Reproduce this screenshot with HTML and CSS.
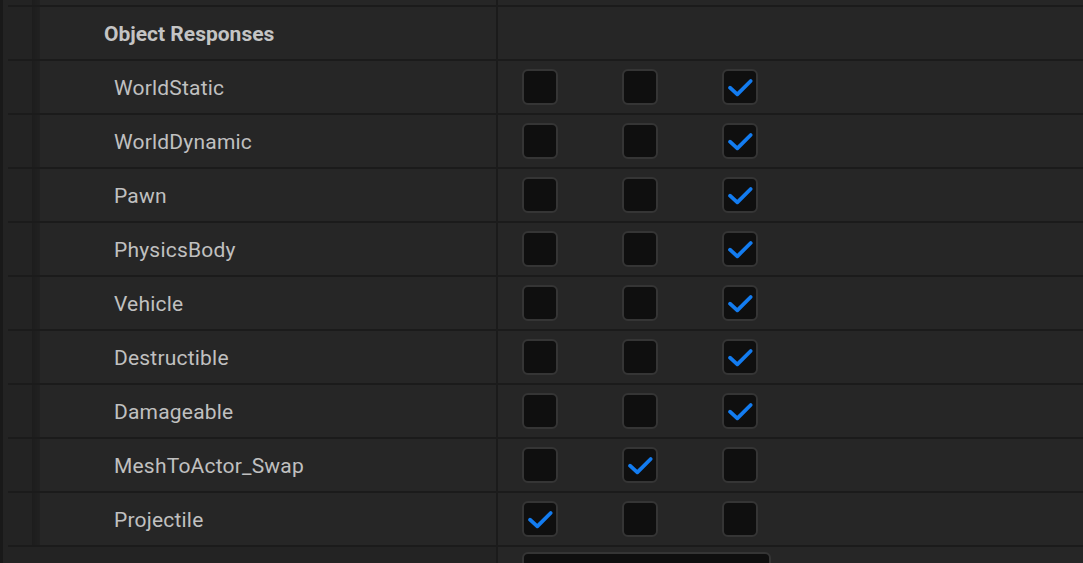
FILE: index.html
```html
<!DOCTYPE html>
<html lang="en">
<head>
    <meta charset="UTF-8">
    <meta name="viewport" content="width=device-width, initial-scale=1.0">
    <title>Collision Presets</title>
    <link rel="stylesheet" href="styles.css">
</head>
<body>
    <div class="panel">
        <div class="edge"></div>
        <div class="list">
            <!-- resto da linha anterior -->
            <div class="row stub">
                <div class="indent"></div>
                <div class="shade"></div>
                <div class="name"></div>
                <div class="divider"></div>
                <div class="value"></div>
            </div>

            <div class="row">
                <div class="indent"></div>
                <div class="shade"></div>
                <div class="name header">Object Responses</div>
                <div class="divider"></div>
                <div class="value"></div>
            </div>

            <div class="row">
                <div class="indent"></div>
                <div class="shade"></div>
                <div class="name">WorldStatic</div>
                <div class="divider"></div>
                <div class="value">
                    <span class="check"></span>
                    <span class="check"></span>
                    <span class="check on"><svg viewBox="0 0 32 32"><path d="M6 16.7 L13.3 23.3 L26.7 10"/></svg></span>
                </div>
            </div>

            <div class="row">
                <div class="indent"></div>
                <div class="shade"></div>
                <div class="name">WorldDynamic</div>
                <div class="divider"></div>
                <div class="value">
                    <span class="check"></span>
                    <span class="check"></span>
                    <span class="check on"><svg viewBox="0 0 32 32"><path d="M6 16.7 L13.3 23.3 L26.7 10"/></svg></span>
                </div>
            </div>

            <div class="row">
                <div class="indent"></div>
                <div class="shade"></div>
                <div class="name">Pawn</div>
                <div class="divider"></div>
                <div class="value">
                    <span class="check"></span>
                    <span class="check"></span>
                    <span class="check on"><svg viewBox="0 0 32 32"><path d="M6 16.7 L13.3 23.3 L26.7 10"/></svg></span>
                </div>
            </div>

            <div class="row">
                <div class="indent"></div>
                <div class="shade"></div>
                <div class="name">PhysicsBody</div>
                <div class="divider"></div>
                <div class="value">
                    <span class="check"></span>
                    <span class="check"></span>
                    <span class="check on"><svg viewBox="0 0 32 32"><path d="M6 16.7 L13.3 23.3 L26.7 10"/></svg></span>
                </div>
            </div>

            <div class="row">
                <div class="indent"></div>
                <div class="shade"></div>
                <div class="name">Vehicle</div>
                <div class="divider"></div>
                <div class="value">
                    <span class="check"></span>
                    <span class="check"></span>
                    <span class="check on"><svg viewBox="0 0 32 32"><path d="M6 16.7 L13.3 23.3 L26.7 10"/></svg></span>
                </div>
            </div>

            <div class="row">
                <div class="indent"></div>
                <div class="shade"></div>
                <div class="name">Destructible</div>
                <div class="divider"></div>
                <div class="value">
                    <span class="check"></span>
                    <span class="check"></span>
                    <span class="check on"><svg viewBox="0 0 32 32"><path d="M6 16.7 L13.3 23.3 L26.7 10"/></svg></span>
                </div>
            </div>

            <div class="row">
                <div class="indent"></div>
                <div class="shade"></div>
                <div class="name">Damageable</div>
                <div class="divider"></div>
                <div class="value">
                    <span class="check"></span>
                    <span class="check"></span>
                    <span class="check on"><svg viewBox="0 0 32 32"><path d="M6 16.7 L13.3 23.3 L26.7 10"/></svg></span>
                </div>
            </div>

            <div class="row">
                <div class="indent"></div>
                <div class="shade"></div>
                <div class="name">MeshToActor_Swap</div>
                <div class="divider"></div>
                <div class="value">
                    <span class="check"></span>
                    <span class="check on"><svg viewBox="0 0 32 32"><path d="M6 16.7 L13.3 23.3 L26.7 10"/></svg></span>
                    <span class="check"></span>
                </div>
            </div>

            <div class="row last">
                <div class="indent"></div>
                <div class="shade"></div>
                <div class="name">Projectile</div>
                <div class="divider"></div>
                <div class="value">
                    <span class="check on"><svg viewBox="0 0 32 32"><path d="M6 16.7 L13.3 23.3 L26.7 10"/></svg></span>
                    <span class="check"></span>
                    <span class="check"></span>
                </div>
            </div>

            <!-- próxima propriedade (combo) -->
            <div class="footer">
                <div class="footer-name"></div>
                <div class="divider"></div>
                <div class="value">
                    <div class="combo"></div>
                </div>
            </div>
        </div>
    </div>
</body>
</html>
```

FILE: styles.css
```css
/* Painel de detalhes */
body {
    margin: 0;
    padding: 0;
    background-color: #232323;
    font-family: Roboto, "Liberation Sans", sans-serif;
    color: #c0c0c0;
    overflow: hidden;
}

.panel {
    display: flex;
    height: 563px;
}

.edge {
    width: 3px;
    background-color: #191919;
}

.list {
    flex: 1;
    margin-left: 5px;
    display: flex;
    flex-direction: column;
}

.row {
    display: grid;
    grid-template-columns: 24px 8px 456px 2px 1fr;
    height: 52px;
    flex-shrink: 0;
    border-top: 2px solid #1b1b1b;
}

.row.stub {
    height: 5px;
    border-top: none;
}

.row.last {
    border-bottom: 2px solid #1b1b1b;
}

.indent {
    background-color: #232323;
}

.shade {
    background: linear-gradient(to right, #1d1d1d, #212121);
}

.name {
    background-color: #262626;
    display: flex;
    align-items: center;
    padding-left: 74px;
    padding-top: 1px;
    font-size: 21px;
    letter-spacing: 0.2px;
}

.name.header {
    padding-left: 64px;
    font-weight: bold;
    letter-spacing: 0;
    color: #c4c4c4;
}

.divider {
    background-color: #1b1b1b;
}

.value {
    background-color: #262626;
    display: flex;
    align-items: center;
    gap: 64px;
    padding-left: 24px;
}

/* Caixas de seleção */
.check {
    width: 32px;
    height: 32px;
    border: 2px solid #353535;
    border-radius: 6px;
    background-color: #0f0f0f;
    display: block;
}

.check svg {
    width: 32px;
    height: 32px;
    display: block;
}

.check svg path {
    fill: none;
    stroke: #137cf0;
    stroke-width: 3.8;
    stroke-linecap: round;
    stroke-linejoin: round;
}

/* Rodapé com o combo seguinte */
.footer {
    flex: 1;
    display: grid;
    grid-template-columns: 488px 2px 1fr;
}

.footer-name {
    background-color: #232323;
}

.footer .value {
    align-items: flex-start;
    padding-top: 5px;
}

.combo {
    width: 245px;
    height: 30px;
    border: 2px solid #353535;
    border-radius: 6px;
    background-color: #0f0f0f;
}
```
